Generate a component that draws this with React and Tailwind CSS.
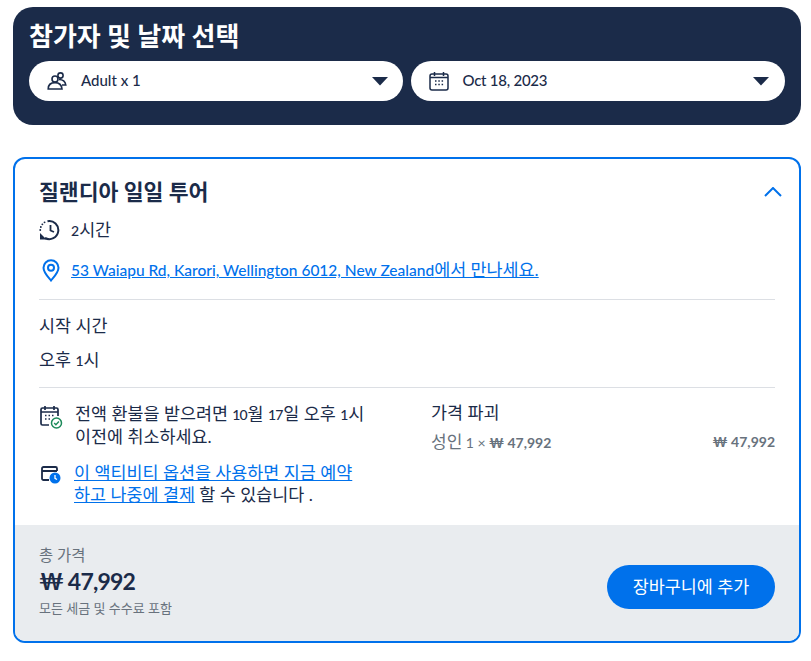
const FONT = "font-['Lato','Noto_Sans_CJK_KR',sans-serif]";

// latin digits sit smaller and tighter than the hangul around them
function L({ children }) {
  return <span className="text-[14px] tracking-[-1px] font-medium mr-[1px]">{children}</span>;
}

function Caret() {
  return (
    <svg width="16" height="9" viewBox="0 0 16 9" className="shrink-0">
      <path d="M0 0h16L8 8.5z" fill="#1b2b49" />
    </svg>
  );
}

function PeopleIcon() {
  return (
    <svg width="20" height="20" viewBox="0 0 20 20" fill="none" stroke="#1b2b49" strokeWidth="1.6" className="shrink-0">
      <circle cx="8" cy="8" r="3" />
      <circle cx="13.5" cy="4.5" r="2.6" />
      <path d="M1.2 18c0-4 2.6-6.4 6.8-6.4s6.6 2.2 7 6.4z" />
      <path d="M12 8.5c3.6 0 6.2 1.5 6.8 5.5H15" />
    </svg>
  );
}

function CalendarIcon() {
  return (
    <svg width="20" height="20" viewBox="0 0 20 20" fill="none" className="shrink-0">
      <rect x="1" y="3" width="18" height="16" rx="2" stroke="#1b2b49" strokeWidth="1.5" />
      <path d="M5.5 1v4M14.5 1v4M1 6.5h18" stroke="#1b2b49" strokeWidth="1.5" />
      <path d="M6 10h1.5M9.3 10h1.5M12.6 10h1.5M6 13.5h1.5M9.3 13.5h1.5M12.6 13.5h1.5" stroke="#1b2b49" strokeWidth="1.5" />
    </svg>
  );
}

function HistoryIcon() {
  return (
    <svg width="22" height="22" viewBox="0 0 22 22" fill="none" className="shrink-0">
      <path d="M8.5 2.3A9 9 0 1 1 6 19" stroke="#1b2b49" strokeWidth="2" />
      <path d="M11.5 6v5.500l3.500 1.500" stroke="#1b2b49" strokeWidth="1.8" />
      <path d="M1 14v6.5h6.5z" fill="#1b2b49" />
      <path d="M1.2 11h.1M1.8 8h.1M3.3 5.300h.1M5.5 3.300h.1" stroke="#1b2b49" strokeWidth="1.8" strokeLinecap="round" />
    </svg>
  );
}

function PinIcon() {
  return (
    <svg width="24" height="24" viewBox="0 0 24 24" fill="none" stroke="#0071eb" strokeWidth="2" className="shrink-0">
      <path d="M12 22.5C8 18 4.5 14.500 4.5 9.800a7.5 7.5 0 0 1 15 0c0 4.700-3.500 8.200-7.500 12.700z" />
      <circle cx="12" cy="9.8" r="3" />
    </svg>
  );
}

function ChevronIcon() {
  return (
    <svg width="18" height="10" viewBox="0 0 18 10" fill="none" stroke="#0071eb" strokeWidth="2" className="shrink-0 -mr-[7px]">
      <path d="M1 9l8-8 8 8" />
    </svg>
  );
}

function RefundIcon() {
  return (
    <svg width="24" height="24" viewBox="0 0 24 24" fill="none" className="shrink-0 mt-[2px]">
      <path d="M10 20H3.5A1.5 1.5 0 0 1 2 18.500V4.500A1.5 1.5 0 0 1 3.500 3h14A1.5 1.5 0 0 1 19 4.500V11" stroke="#1b2b49" strokeWidth="1.7" />
      <path d="M6 1v4M15 1v4M2 7h17" stroke="#1b2b49" strokeWidth="1.7" />
      <path d="M6 10.5h1.5M9.5 10.5H11M13 10.5h1.5M6 14h1.5M9.5 14H11" stroke="#1b2b49" strokeWidth="1.5" />
      <circle cx="17.5" cy="18" r="5" fill="#fff" stroke="#1d8a5a" strokeWidth="1.5" />
      <path d="M15.2 18l1.7 1.700 3-3.200" stroke="#1d8a5a" strokeWidth="1.4" />
    </svg>
  );
}

function PayLaterIcon() {
  return (
    <svg width="22" height="22" viewBox="0 0 22 22" fill="none" className="shrink-0">
      <path d="M9 17H3.5A1.5 1.5 0 0 1 2 15.500v-10A1.5 1.5 0 0 1 3.500 4h12A1.5 1.5 0 0 1 17 5.500V8" stroke="#1b2b49" strokeWidth="1.8" />
      <path d="M2 8h15" stroke="#1b2b49" strokeWidth="2" />
      <circle cx="15" cy="15" r="5.5" fill="#0071eb" />
      <path d="M15 12v3.3l2 1.2" stroke="#fff" strokeWidth="1.3" />
    </svg>
  );
}

export default function App() {
  return (
    <div className={`${FONT} w-[811px] h-[661px] bg-white pt-[7px] pl-[13px] pr-[10px] text-[#1b2b49]`}>
      <div className="rounded-[20px] bg-[#1b2b49] h-[118px] px-4 pt-[13px]">
        <h1 className="text-[26px] leading-[32px] font-bold text-white">참가자 및 날짜 선택</h1>
        <div className="flex gap-2 mt-[9px]">
          <button className="flex-1 h-10 rounded-full bg-white flex items-center pl-[18px] pr-[15px]">
            <PeopleIcon />
            <span className="ml-[14px] text-[15px] leading-[20px] -mt-[2px] font-medium flex-1 text-left">Adult x 1</span>
            <Caret />
          </button>
          <button className="flex-1 h-10 rounded-full bg-white flex items-center pl-[18px] pr-4">
            <CalendarIcon />
            <span className="ml-[14px] text-[15px] leading-[20px] -mt-[2px] tracking-[-0.25px] font-medium flex-1 text-left">Oct 18, 2023</span>
            <Caret />
          </button>
        </div>
      </div>

      <div className="mt-8 h-[486px] rounded-xl border-2 border-[#0071eb] overflow-hidden flex flex-col">
        <div className="flex-1 px-6 pt-[17px] text-[17.4px]">
          <div className="flex items-center justify-between h-[32px]">
            <h2 className="text-[21.6px] font-bold">질랜디아 일일 투어</h2>
            <ChevronIcon />
          </div>
          <div className="flex items-center gap-[10px] mt-[10px] h-[24px]">
            <HistoryIcon />
            <span><L>2</L>시간</span>
          </div>
          <div className="flex items-center gap-[8px] mt-[16px] h-[24px]">
            <PinIcon />
            <a className="text-[#0071eb] underline"><span className="text-[15.5px] font-medium">53 Waiapu Rd, Karori, Wellington 6012, New Zealand</span>에서 만나세요.</a>
          </div>
          <div className="border-t border-[#dcdfe4] mt-[17px]" />
          <p className="leading-[24px] mt-[14px]">시작 시간</p>
          <p className="leading-[24px] mt-[10px]">오후 <L>1</L>시</p>
          <div className="border-t border-[#dcdfe4] mt-[14px]" />
          <div className="flex mt-[15px]">
            <div className="w-[392px]">
              <div className="flex gap-[12px]">
                <RefundIcon />
                <p className="leading-[22px] w-[300px] break-keep">전액 환불을 받으려면 <L>10</L>월 <L>17</L>일 오후 <L>1</L>시 이전에 취소하세요.</p>
              </div>
              <div className="flex gap-[13px] mt-[14px] items-start">
                <div className="pt-[1px] pl-[1px] -mr-[1px]"><PayLaterIcon /></div>
                <p className="leading-[22px] w-[285px] break-keep">
                  <a className="text-[#0071eb] underline">이 액티비티 옵션을 사용하면 지금 예약 하고 나중에 결제</a> 할 수 있습니다 .
                </p>
              </div>
            </div>
            <div className="flex-1 -mt-[2px]">
              <p className="leading-[24px]">가격 파괴</p>
              <div className="flex justify-between mt-[5px] text-[14px] leading-[24px] text-[#68727d] font-bold">
                <span><span className="text-[17px] font-normal">성인</span> <span className="font-normal">1 ×</span> ₩ 47,992</span>
                <span>₩ 47,992</span>
              </div>
            </div>
          </div>
        </div>
        <div className="h-[116px] bg-[#e9ecef] px-6 flex items-center justify-between">
          <div className="mb-[4px]">
            <p className="text-[15.4px] leading-[18px] text-[#68727d]">총 가격</p>
            <p className="text-[23px] leading-[32px] tracking-[-0.8px] font-bold mt-[1px]">₩ 47,992</p>
            <p className="text-[13px] leading-[18px] text-[#68727d] mt-[2px]">모든 세금 및 수수료 포함</p>
          </div>
          <button className="w-[168px] h-[44px] rounded-full bg-[#0071eb] text-white text-[17.4px] mt-[8px]">장바구니에 추가</button>
        </div>
      </div>
    </div>
  );
}
